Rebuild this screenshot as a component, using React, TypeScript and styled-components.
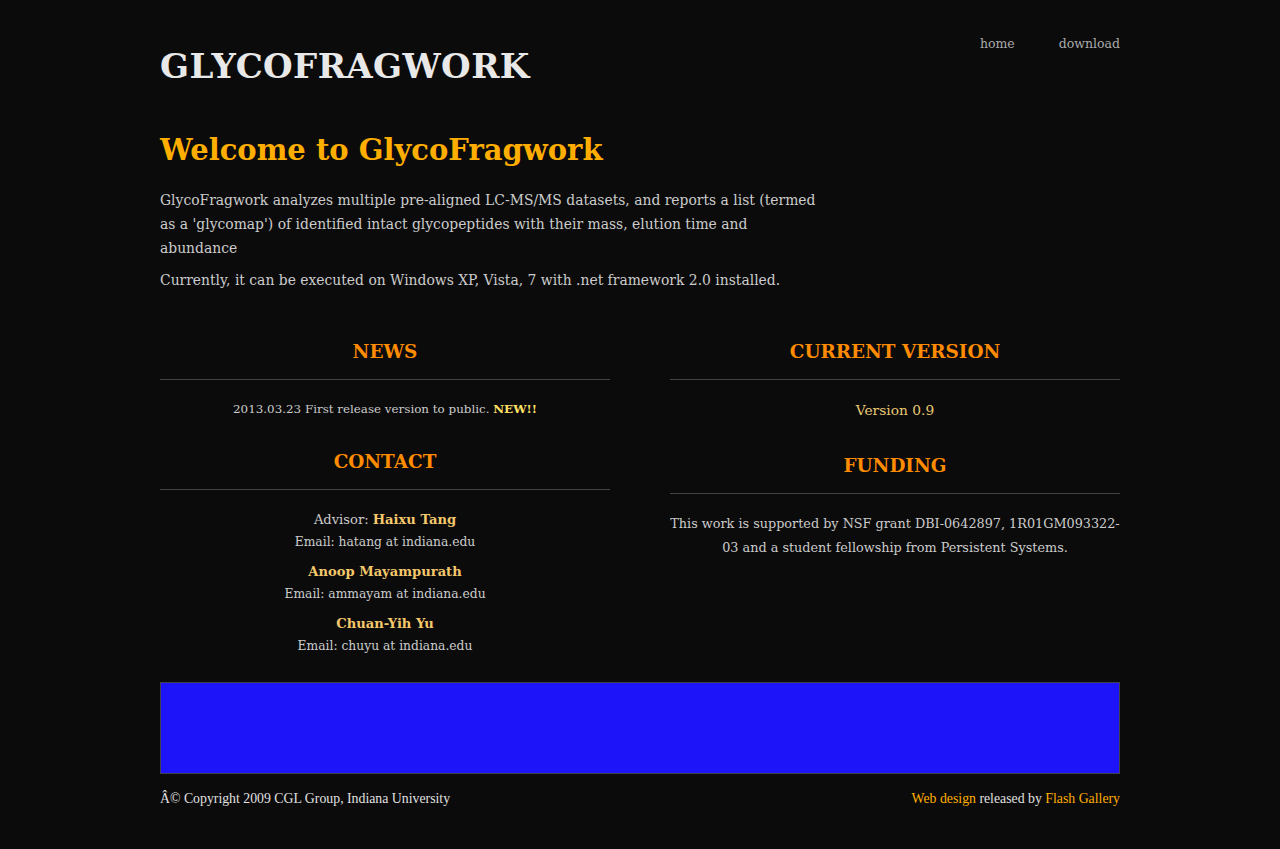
import React from "react";
import styled, { createGlobalStyle } from "styled-components";

const Global = createGlobalStyle`
  html, body { margin: 0; padding: 0; background: #0b0b0b; }
  body { font-family: "DejaVu Serif", "Liberation Serif", serif; color: #cccccc; }
`;

const Page = styled.div`
  width: 960px;
  margin: 0 auto;
  padding-top: 30px;
`;

const Header = styled.header`
  display: flex;
  justify-content: space-between;
  align-items: flex-start;
  height: 90px;
`;

const Logo = styled.h1`
  margin: 14px 0 0;
  font-size: 34px;
  font-weight: bold;
  letter-spacing: 0.4px;
  color: #e8e8e8;
  line-height: 44px;
`;

const Nav = styled.nav`
  display: flex;
  gap: 44px;
  padding-top: 6px;
`;

const NavLink = styled.a`
  font-size: 12.5px;
  color: #aaaaaa;
  text-decoration: none;
`;

const Intro = styled.section`
  width: 666px;
  margin-top: 8px;
`;

const Welcome = styled.h2`
  margin: 0 0 16px;
  font-size: 29px;
  line-height: 44px;
  font-weight: bold;
  color: #ffae00;
`;

const P = styled.p<{ $size?: number }>`
  margin: 0 0 8px;
  font-size: ${(p) => p.$size ?? 13.9}px;
  line-height: 24px;
`;

const Columns = styled.div`
  display: grid;
  grid-template-columns: 450px 450px;
  column-gap: 60px;
  margin-top: 45px;
`;

const Col = styled.div`
  display: flex;
  flex-direction: column;
`;

const Block = styled.div<{ $gap?: number }>`
  text-align: center;
  margin-bottom: ${(p) => p.$gap ?? 0}px;
`;

const H3 = styled.h3`
  margin: 0;
  font-size: 18.4px;
  line-height: 30px;
  font-weight: bold;
  color: #ff8c00;
  padding-bottom: 12px;
  border-bottom: 1px solid #444;
  margin-bottom: 18px;
`;

const Small = styled.div<{ $size?: number }>`
  font-size: ${(p) => p.$size ?? 12.3}px;
  line-height: 22px;
`;

const NameLine = styled.div`
  font-size: 13.1px;
  line-height: 23px;
`;

const Name = styled.strong`
  color: #f5c86b;
  font-weight: bold;
`;

const NewTag = styled.strong`
  color: #ffe066;
`;

const Version = styled.div`
  font-size: 13.8px;
  line-height: 24px;
  color: #e8c870;
`;

const Person = styled.div`
  margin-bottom: 7px;
  &:last-child { margin-bottom: 0; }
`;

const Banner = styled.div`
  margin-top: 25px;
  height: 90px;
  background: #1e14fa;
  border: 1px solid #444;
`;

const Footer = styled.footer`
  display: flex;
  justify-content: space-between;
  font-family: "Liberation Serif", serif;
  font-size: 13.8px;
  line-height: 18px;
  color: #e0e0e0;
  padding-top: 16px;
`;

const FootLink = styled.a`
  color: #ffae00;
  text-decoration: none;
`;

export default function App() {
  return (
    <>
      <Global />
      <Page>
        <Header>
          <Logo>GLYCOFRAGWORK</Logo>
          <Nav>
            <NavLink href="#">home</NavLink>
            <NavLink href="#">download</NavLink>
          </Nav>
        </Header>
        <Intro>
          <Welcome>Welcome to GlycoFragwork</Welcome>
          <P>
            GlycoFragwork analyzes multiple pre-aligned LC-MS/MS datasets, and reports a list (termed
            as a 'glycomap') of identified intact glycopeptides with their mass, elution time and
            abundance
          </P>
          <P>Currently, it can be executed on Windows XP, Vista, 7 with .net framework 2.0 installed.</P>
        </Intro>
        <Columns>
          <Col>
            <Block $gap={27}>
              <H3>NEWS</H3>
              <Small $size={11.9}>
                2013.03.23 First release version to public. <NewTag>NEW!!</NewTag>
              </Small>
            </Block>
            <Block>
              <H3>CONTACT</H3>
              <Person>
                <NameLine>
                  Advisor: <Name>Haixu Tang</Name>
                </NameLine>
                <Small>Email: hatang at indiana.edu</Small>
              </Person>
              <Person>
                <NameLine>
                  <Name>Anoop Mayampurath</Name>
                </NameLine>
                <Small>Email: ammayam at indiana.edu</Small>
              </Person>
              <Person>
                <NameLine>
                  <Name>Chuan-Yih Yu</Name>
                </NameLine>
                <Small>Email: chuyu at indiana.edu</Small>
              </Person>
            </Block>
          </Col>
          <Col>
            <Block $gap={29}>
              <H3>CURRENT VERSION</H3>
              <Version>Version 0.9</Version>
            </Block>
            <Block>
              <H3>FUNDING</H3>
              <P $size={12.8}>
                This work is supported by NSF grant DBI-0642897, 1R01GM093322-<wbr />03 and a student
                fellowship from Persistent Systems.
              </P>
            </Block>
          </Col>
        </Columns>
        <Banner />
        <Footer>
          <span>Â© Copyright 2009 CGL Group, Indiana University</span>
          <span>
            <FootLink href="#">Web design</FootLink> released by <FootLink href="#">Flash Gallery</FootLink>
          </span>
        </Footer>
      </Page>
    </>
  );
}
